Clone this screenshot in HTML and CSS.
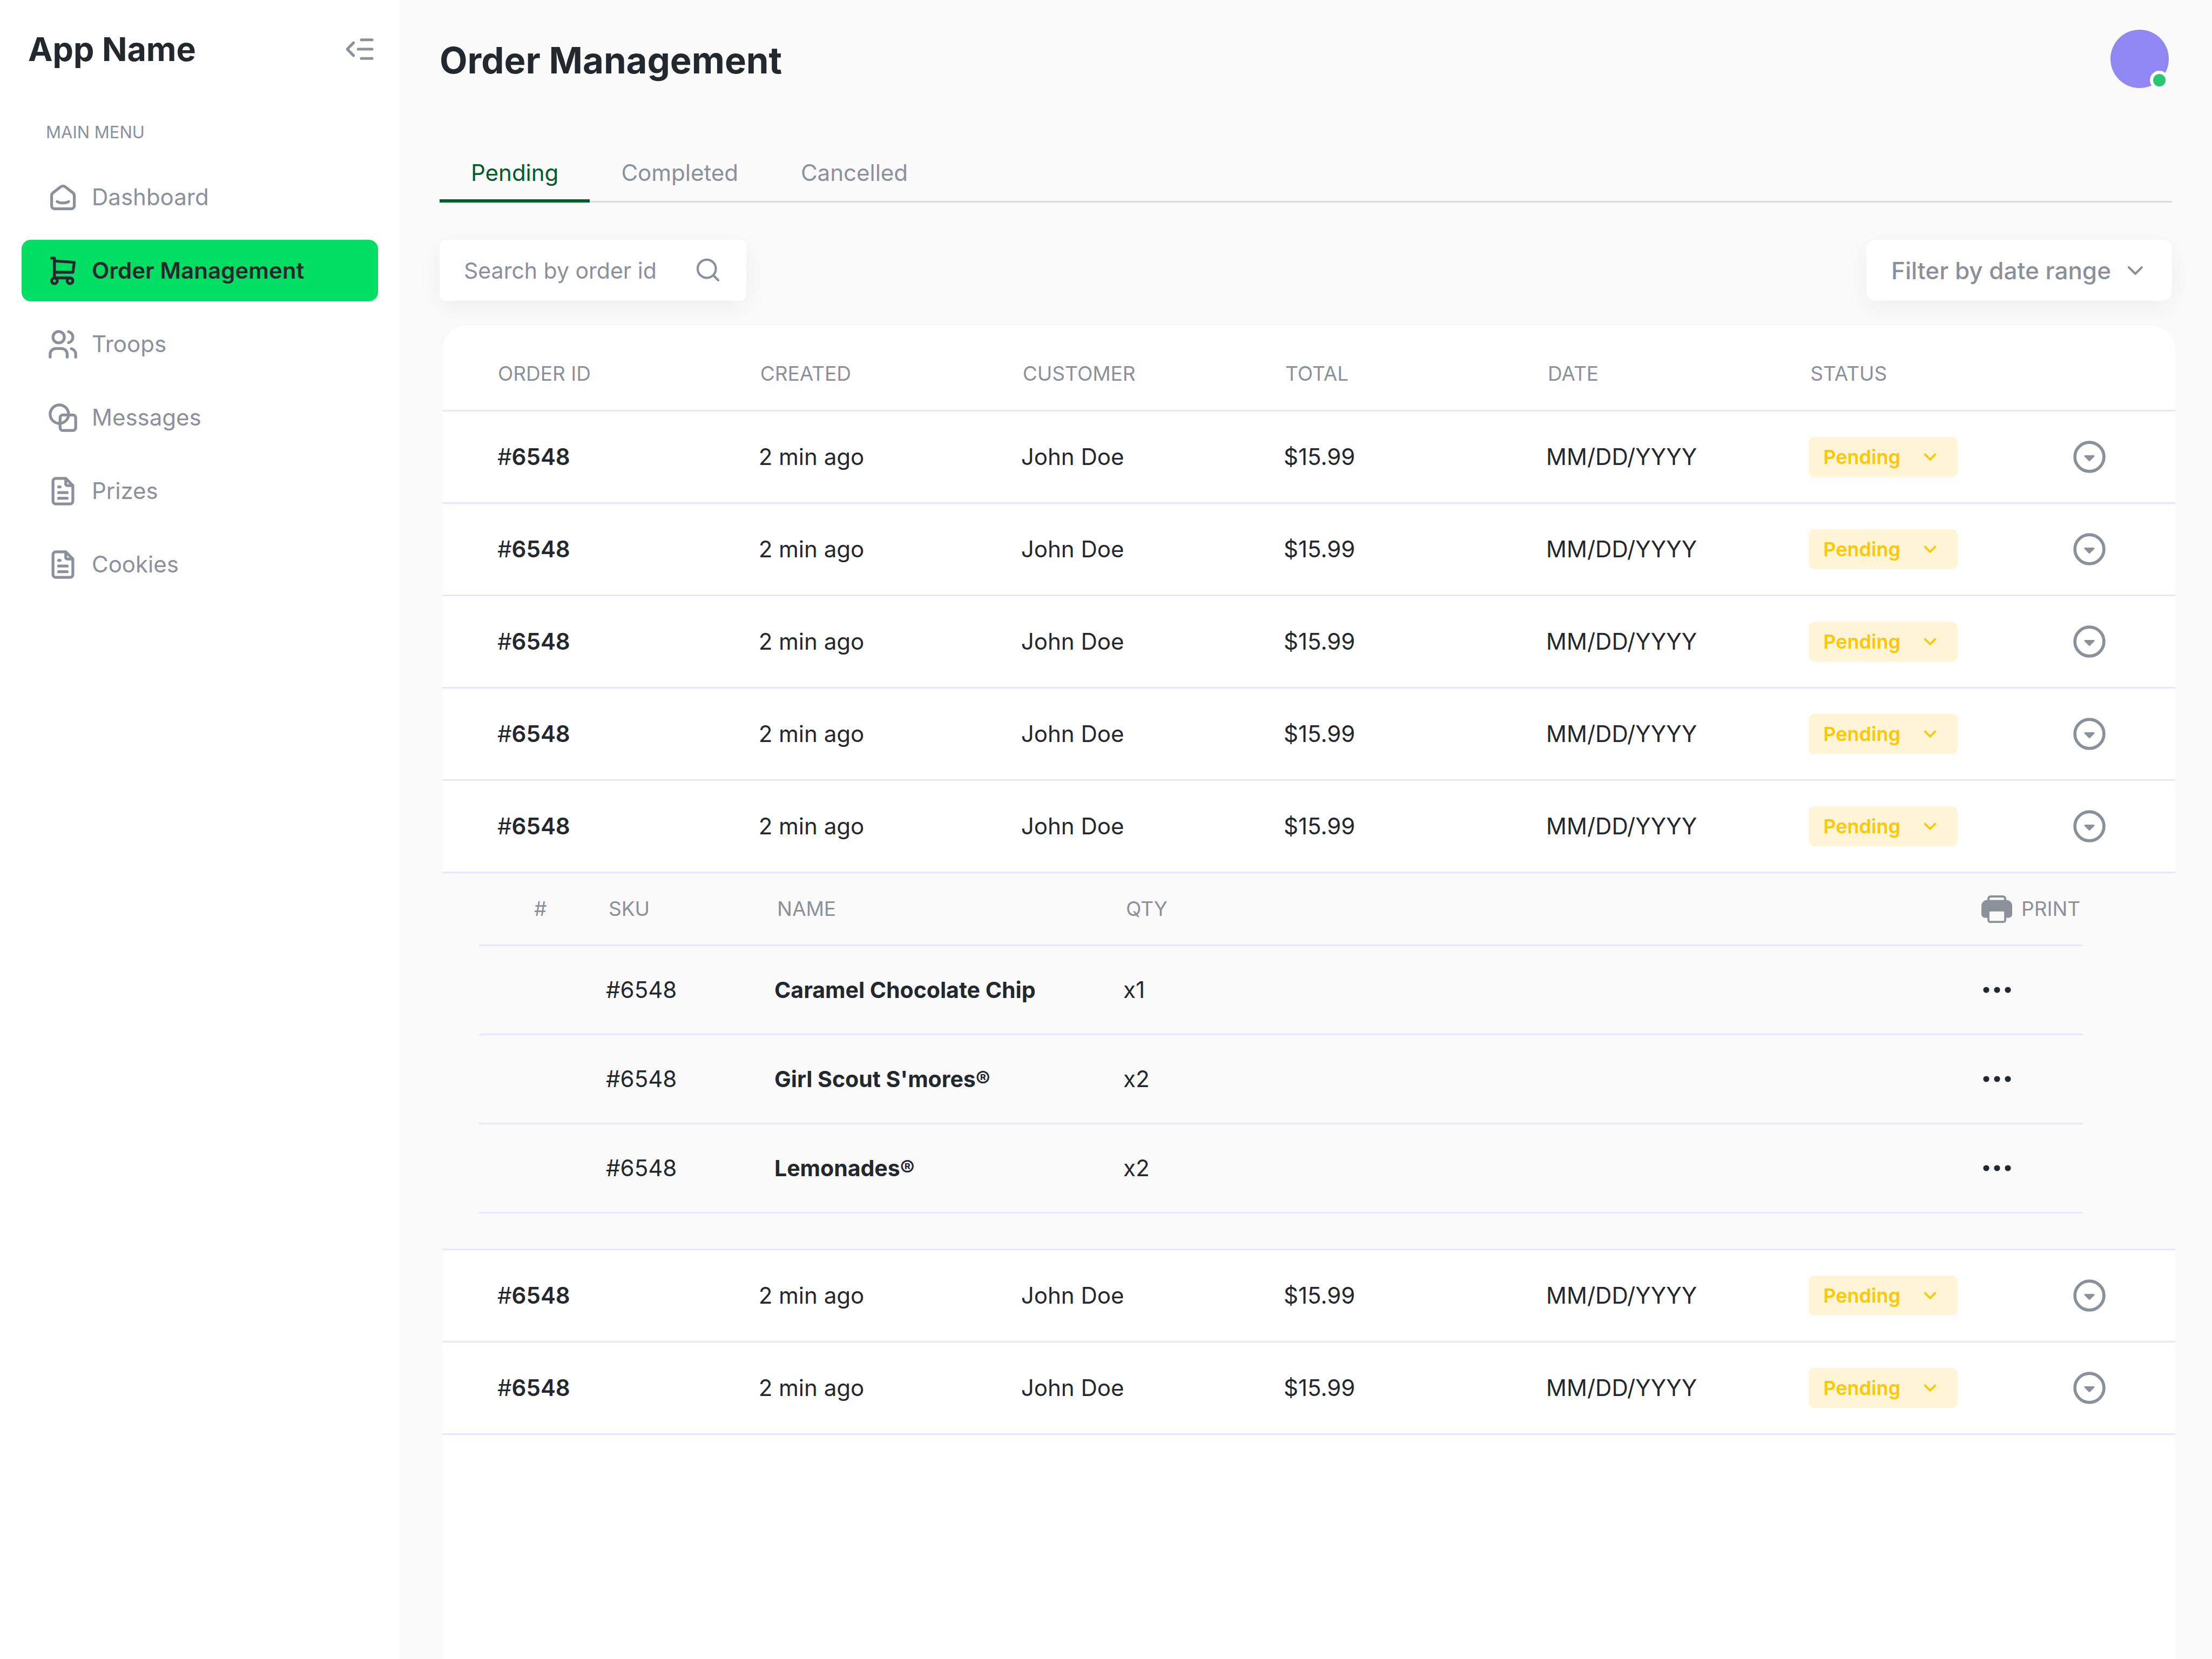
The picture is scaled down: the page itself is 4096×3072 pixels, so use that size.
FILE: index.html
```
<!DOCTYPE html>
<html lang="en">
<head>
  <meta charset="utf-8">
  <meta name="viewport" content="width=device-width, initial-scale=1">
  <title>Order Management</title>
  <link rel="stylesheet" href="styles.css">
</head>
<body>
  <svg class="sprite" aria-hidden="true">
    <symbol id="i-collapse" viewBox="0 0 24 24"><path d="M8 7.8 3.9 12 8 16.2M13.1 5.9h7M11.1 12h9M13.1 18.1h7"/></symbol>
    <symbol id="i-home" viewBox="0 0 24 24"><path d="M19 8.71l-5.333-4.148a2.666 2.666 0 0 0-3.274 0L5.059 8.71a2.665 2.665 0 0 0-1.029 2.105v7.2a2 2 0 0 0 2 2h12a2 2 0 0 0 2-2v-7.2c0-.823-.38-1.6-1.03-2.105M16 15c-2.21 1.333-5.792 1.333-8 0"/></symbol>
    <symbol id="i-cart" viewBox="0 0 24 24"><circle cx="6" cy="19" r="2"/><circle cx="17" cy="19" r="2"/><path d="M17 17H6V3H4M6 5l14 1-1 7H6"/></symbol>
    <symbol id="i-users" viewBox="0 0 24 24"><circle cx="9" cy="7" r="4"/><path d="M3 21v-2a4 4 0 0 1 4-4h4a4 4 0 0 1 4 4v2M16 3.13a4 4 0 0 1 0 7.75M21 21v-2a4 4 0 0 0-3-3.85"/></symbol>
    <symbol id="i-shapes" viewBox="0 0 24 24"><circle cx="9.5" cy="9.5" r="6.5"/><rect x="10" y="10" width="11" height="11" rx="2"/></symbol>
    <symbol id="i-file" viewBox="0 0 24 24"><path d="M14 3v4a1 1 0 0 0 1 1h4M17 21H7a2 2 0 0 1-2-2V5a2 2 0 0 1 2-2h7l5 5v11a2 2 0 0 1-2 2zM9 9h1M9 13h6M9 17h6"/></symbol>
    <symbol id="i-search" viewBox="0 0 24 24"><circle cx="10.700" cy="10.700" r="7.900"/><path d="M16.400 16.400l4.300 4.300"/></symbol>
    <symbol id="i-chevron" viewBox="0 0 24 24"><path d="M6 9l6 6 6-6"/></symbol>
    <symbol id="i-chevron-sharp" viewBox="0 0 24 24"><path d="M12 13.17l4.95-4.95 1.41 1.42L12 16 5.64 9.64l1.41-1.42z"/></symbol>
    <symbol id="i-expand" viewBox="0 0 24 24"><circle cx="12" cy="12" r="9.5" fill="none" stroke="currentColor" stroke-width="2"/><path d="M9.2 10.9h5.6c.5 0 .7.5.4.9l-2.7 2.8c-.3.3-.7.3-1 0l-2.7-2.8c-.3-.4-.1-.9.4-.9z"/></symbol>
    <symbol id="i-more" viewBox="0 0 57 12"><circle cx="9" cy="6" r="5.6"/><circle cx="29" cy="6" r="5.6"/><circle cx="49" cy="6" r="5.6"/></symbol>
    <symbol id="i-print" viewBox="0 0 57 51"><rect x="13" y="2" width="31" height="20" rx="4" fill="#fafafa" stroke="currentColor" stroke-width="4"/><path d="M11 8.500h35a11 11 0 0 1 11 11V35a6.500 6.500 0 0 1-6.500 6.500h-44A6.500 6.500 0 0 1 0 35V19.500a11 11 0 0 1 11-11z"/><rect x="13" y="27.800" width="31" height="21.300" rx="3" fill="#fafafa" stroke="currentColor" stroke-width="3.800"/></symbol>
  </svg>

  <div class="app">
    <aside class="sidebar">
      <div class="brand">
        <span class="brand-name">App Name</span>
        <button class="icon-btn" type="button" aria-label="Collapse menu"><svg class="icon icon-collapse"><use href="#i-collapse"/></svg></button>
      </div>
      <h2 class="menu-label">MAIN MENU</h2>
      <nav class="menu" aria-label="Main menu">
        <a class="menu-item" href="#dashboard"><svg class="icon icon-nav"><use href="#i-home"/></svg>Dashboard</a>
        <a class="menu-item active" href="#orders" aria-current="page"><svg class="icon icon-nav"><use href="#i-cart"/></svg>Order Management</a>
        <a class="menu-item" href="#troops"><svg class="icon icon-nav"><use href="#i-users"/></svg>Troops</a>
        <a class="menu-item" href="#messages"><svg class="icon icon-nav"><use href="#i-shapes"/></svg>Messages</a>
        <a class="menu-item" href="#prizes"><svg class="icon icon-nav"><use href="#i-file"/></svg>Prizes</a>
        <a class="menu-item" href="#cookies"><svg class="icon icon-nav"><use href="#i-file"/></svg>Cookies</a>
      </nav>
    </aside>

    <main class="main">
      <header class="page-header">
        <h1 class="page-title">Order Management</h1>
        <button class="avatar" type="button" aria-label="Account, online"><span class="avatar-status"></span></button>
      </header>

      <nav class="tabs" aria-label="Order status">
        <a class="tab active" href="#pending" aria-current="true">Pending</a>
        <a class="tab" href="#completed">Completed</a>
        <a class="tab" href="#cancelled">Cancelled</a>
      </nav>

      <div class="toolbar">
        <form class="search" role="search">
          <input class="search-input" type="search" placeholder="Search by order id" aria-label="Search by order id">
          <button class="icon-btn" type="submit" aria-label="Search"><svg class="icon icon-search"><use href="#i-search"/></svg></button>
        </form>
        <div class="dropdown">
          <select class="filter-select" aria-label="Filter by date range"><option>Filter by date range</option></select>
          <svg class="icon icon-filter"><use href="#i-chevron"/></svg>
        </div>
      </div>

      <section class="card">
        <table class="orders">
          <colgroup><col class="col-id"><col class="col"><col class="col"><col class="col"><col class="col"><col class="col"><col></colgroup>
          <thead>
            <tr><th>ORDER ID</th><th>CREATED</th><th>CUSTOMER</th><th>TOTAL</th><th>DATE</th><th>STATUS</th><th></th></tr>
          </thead>
          <tbody>
            <tr><td>#<strong>6548</strong></td><td>2 min ago</td><td>John Doe</td><td>$15.99</td><td>MM/DD/YYYY</td>
              <td><div class="dropdown status"><select class="status-select" aria-label="Status"><option>Pending</option></select><svg class="icon-solid icon-status"><use href="#i-chevron-sharp"/></svg></div></td>
              <td><button class="icon-btn" type="button" aria-label="Show items"><svg class="icon-solid icon-expand"><use href="#i-expand"/></svg></button></td></tr>
            <tr><td>#<strong>6548</strong></td><td>2 min ago</td><td>John Doe</td><td>$15.99</td><td>MM/DD/YYYY</td>
              <td><div class="dropdown status"><select class="status-select" aria-label="Status"><option>Pending</option></select><svg class="icon-solid icon-status"><use href="#i-chevron-sharp"/></svg></div></td>
              <td><button class="icon-btn" type="button" aria-label="Show items"><svg class="icon-solid icon-expand"><use href="#i-expand"/></svg></button></td></tr>
            <tr><td>#<strong>6548</strong></td><td>2 min ago</td><td>John Doe</td><td>$15.99</td><td>MM/DD/YYYY</td>
              <td><div class="dropdown status"><select class="status-select" aria-label="Status"><option>Pending</option></select><svg class="icon-solid icon-status"><use href="#i-chevron-sharp"/></svg></div></td>
              <td><button class="icon-btn" type="button" aria-label="Show items"><svg class="icon-solid icon-expand"><use href="#i-expand"/></svg></button></td></tr>
            <tr><td>#<strong>6548</strong></td><td>2 min ago</td><td>John Doe</td><td>$15.99</td><td>MM/DD/YYYY</td>
              <td><div class="dropdown status"><select class="status-select" aria-label="Status"><option>Pending</option></select><svg class="icon-solid icon-status"><use href="#i-chevron-sharp"/></svg></div></td>
              <td><button class="icon-btn" type="button" aria-label="Show items"><svg class="icon-solid icon-expand"><use href="#i-expand"/></svg></button></td></tr>
            <tr><td>#<strong>6548</strong></td><td>2 min ago</td><td>John Doe</td><td>$15.99</td><td>MM/DD/YYYY</td>
              <td><div class="dropdown status"><select class="status-select" aria-label="Status"><option>Pending</option></select><svg class="icon-solid icon-status"><use href="#i-chevron-sharp"/></svg></div></td>
              <td><button class="icon-btn" type="button" aria-label="Hide items" aria-expanded="true"><svg class="icon-solid icon-expand"><use href="#i-expand"/></svg></button></td></tr>
            <tr class="detail-row"><td class="detail" colspan="7">
              <table class="items">
                <colgroup><col class="col-num"><col class="col-sku"><col class="col-name"><col><col class="col-actions"></colgroup>
                <thead>
                  <tr><th>#</th><th>SKU</th><th>NAME</th><th>QTY</th><th><button class="print" type="button"><svg class="icon-solid icon-print"><use href="#i-print"/></svg>PRINT</button></th></tr>
                </thead>
                <tbody>
                  <tr><td></td><td>#6548</td><td class="item-name">Caramel Chocolate Chip</td><td>x1</td><td><button class="icon-btn more" type="button" aria-label="More actions"><svg class="icon-solid icon-more"><use href="#i-more"/></svg></button></td></tr>
                  <tr><td></td><td>#6548</td><td class="item-name">Girl Scout S'mores®</td><td>x2</td><td><button class="icon-btn more" type="button" aria-label="More actions"><svg class="icon-solid icon-more"><use href="#i-more"/></svg></button></td></tr>
                  <tr><td></td><td>#6548</td><td class="item-name">Lemonades®</td><td>x2</td><td><button class="icon-btn more" type="button" aria-label="More actions"><svg class="icon-solid icon-more"><use href="#i-more"/></svg></button></td></tr>
                </tbody>
              </table>
            </td></tr>
            <tr><td>#<strong>6548</strong></td><td>2 min ago</td><td>John Doe</td><td>$15.99</td><td>MM/DD/YYYY</td>
              <td><div class="dropdown status"><select class="status-select" aria-label="Status"><option>Pending</option></select><svg class="icon-solid icon-status"><use href="#i-chevron-sharp"/></svg></div></td>
              <td><button class="icon-btn" type="button" aria-label="Show items"><svg class="icon-solid icon-expand"><use href="#i-expand"/></svg></button></td></tr>
            <tr><td>#<strong>6548</strong></td><td>2 min ago</td><td>John Doe</td><td>$15.99</td><td>MM/DD/YYYY</td>
              <td><div class="dropdown status"><select class="status-select" aria-label="Status"><option>Pending</option></select><svg class="icon-solid icon-status"><use href="#i-chevron-sharp"/></svg></div></td>
              <td><button class="icon-btn" type="button" aria-label="Show items"><svg class="icon-solid icon-expand"><use href="#i-expand"/></svg></button></td></tr>
          </tbody>
        </table>
      </section>
    </main>
  </div>
</body>
</html>
```
FILE: styles.css
```
:root {
  --text: #23272e;
  --muted: #8b909a;
  --page: #fafafa;
  --line: #e8e5ff;
  --green: #00de63;
  --dark-green: #005c29;
  --amber: #ffc700;
}

* { box-sizing: border-box; }

body {
  margin: 0;
  background: var(--page);
  color: var(--text);
  font: 400 42px/52px Inter, "Liberation Sans", sans-serif;
}

h1, h2 { margin: 0; }
a { color: inherit; text-decoration: none; }
button, input, select { font: inherit; color: inherit; border: 0; margin: 0; padding: 0; background: none; }
svg { display: block; flex: none; }

.sprite { position: absolute; width: 0; height: 0; }

.icon { fill: none; stroke: currentColor; stroke-width: 2; stroke-linecap: round; stroke-linejoin: round; }
.icon-solid { fill: currentColor; }
.icon-btn { display: inline-flex; color: var(--muted); }

.app { display: flex; min-height: 100vh; }

/* Sidebar */
.sidebar { flex: none; width: 740px; padding: 50px 40px; background: #fff; }
.brand { display: flex; align-items: center; justify-content: space-between; height: 82px; padding-left: 12px; }
.brand-name { font-size: 61px; font-weight: 700; line-height: 82px; }
.icon-collapse { width: 68px; height: 68px; stroke-width: 1.8; }
.menu-label { margin: 93px 0 43px 45px; color: var(--muted); font-size: 31px; font-weight: 400; line-height: 40px; }
.menu { display: flex; flex-direction: column; gap: 22px; }
.menu-item { display: flex; align-items: center; gap: 22px; height: 114px; padding-left: 45px; border-radius: 17px; color: var(--muted); }
.menu-item.active { background: var(--green); color: var(--text); font-weight: 600; }
.icon-nav { width: 63px; height: 63px; }

/* Page header */
.main { flex: 1; display: flex; flex-direction: column; min-width: 0; padding: 55px 68px 0 74px; }
.page-header { display: flex; align-items: center; justify-content: space-between; padding-right: 12px; }
.page-title { padding-top: 6px; font-size: 67px; font-weight: 700; line-height: 82px; }
.avatar { position: relative; width: 108px; height: 108px; border-radius: 50%; background: #9087f3; }
.avatar-status { position: absolute; right: 0; bottom: -3px; width: 35px; height: 35px; border: 6px solid #fff; border-radius: 50%; background: #28c76f; }

/* Tabs */
.tabs { display: flex; margin: 108px 6px 0 0; box-shadow: inset 0 -3px #dadbdc; color: var(--muted); }
.tab { padding: 23px 58px; border-bottom: 6px solid transparent; }
.tab.active { border-color: var(--dark-green); color: var(--dark-green); }

/* Toolbar */
.toolbar { display: flex; justify-content: space-between; margin: 69px 6px 46px 0; color: var(--muted); }
.search { display: flex; align-items: center; width: 568px; height: 113px; padding: 0 45px; border-radius: 11px; background: #fff; box-shadow: 0 12px 48px rgba(0, 0, 0, .05); }
.search-input { flex: 1; min-width: 0; height: 100%; appearance: none; outline: 0; font-size: 41px; }
.search-input::placeholder { color: var(--muted); opacity: 1; }
.icon-search { width: 51px; height: 51px; }

.dropdown { display: grid; align-items: center; }
.dropdown > * { grid-area: 1 / 1; }
.dropdown > svg { justify-self: end; pointer-events: none; }
.dropdown > select { appearance: none; outline: 0; }
.filter-select { width: 566px; height: 113px; padding-left: 46px; border-radius: 17px; background: #fff; box-shadow: 0 12px 48px rgba(0, 0, 0, .05); font-size: 44px; font-weight: 500; }
.icon-filter { width: 48px; height: 48px; margin-right: 44px; }

/* Orders */
.card { flex: 1; margin-left: 5px; border-radius: 45px 45px 0 0; background: #fff; }
table { width: 100%; border-collapse: separate; border-spacing: 0; table-layout: fixed; }
th, td { padding: 0; border-bottom: 3px solid var(--line); text-align: left; vertical-align: middle; }
th { color: var(--muted); font-size: 37px; font-weight: 400; }
strong { font-weight: 600; }

.col-id { width: 18.25%; }
.col { width: 15.15%; }
.orders > thead > tr > th { height: 159px; padding: 22px 0 0 3px; }
.orders > tbody > tr > td { height: 171px; }
.orders > * > tr > :first-child { padding-left: 102px; }
.orders > thead > tr > th:first-child { padding-left: 103px; }
.orders > tbody > tr > td:last-child { padding-right: 128px; text-align: right; }
.orders .icon-btn { vertical-align: middle; }

.status { width: 276px; height: 74px; color: var(--amber); font-size: 36px; font-weight: 600; }
.status-select { width: 100%; height: 74px; padding-left: 27px; border-radius: 11px; background: #fff5d6; }
.icon-status { width: 44px; height: 44px; margin-right: 29px; }
.icon-expand { width: 68px; height: 68px; }

/* Items of the open order */
.orders > tbody > .detail-row > .detail { height: auto; padding: 0 171px 65px 68px; background: var(--page); text-align: left; }
.col-num { width: 235px; }
.col-sku { width: 312px; }
.col-name { width: 646px; }
.col-actions { width: 188px; }
.items th { height: 135px; padding-left: 5px; }
.items th:first-child { padding-left: 102px; }
.items th:last-child { padding-left: 0; }
.items td { height: 165px; }
.item-name { font-size: 41px; font-weight: 700; }
.print { display: flex; align-items: center; gap: 17px; color: var(--muted); }
.icon-print { width: 57px; height: 51px; }
.icon-more { width: 57px; height: 12px; }
.items .more { display: flex; color: var(--text); }
```
